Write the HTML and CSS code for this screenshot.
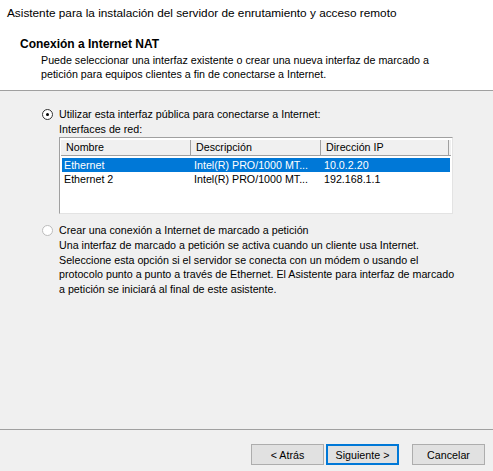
FILE: index.html
```html
<!DOCTYPE html>
<html lang="es">
<head>
<meta charset="utf-8">
<link rel="stylesheet" href="styles.css">
</head>
<body>
<div class="wizard">
  <div class="header">
    <div class="title">Asistente para la instalación del servidor de enrutamiento y acceso remoto</div>
    <div class="heading">Conexión a Internet NAT</div>
    <div class="subtitle">Puede seleccionar una interfaz existente o crear una nueva interfaz de marcado a<br>petición para equipos clientes a fin de conectarse a Internet.</div>
  </div>
  <div class="body">
    <div class="option">
      <span class="radio checked"></span>
      <span class="label">Utilizar esta interfaz pública para conectarse a Internet:</span>
    </div>
    <div class="indent">
      <div class="sublabel">Interfaces de red:</div>
      <div class="listview">
        <div class="lv-header">
          <div class="col c1">Nombre</div>
          <div class="col c2">Descripción</div>
          <div class="col c3">Dirección IP</div>
        </div>
        <div class="lv-row selected">
          <div class="cell c1">Ethernet</div>
          <div class="cell c2">Intel(R) PRO/1000 MT...</div>
          <div class="cell c3">10.0.2.20</div>
        </div>
        <div class="lv-row">
          <div class="cell c1">Ethernet 2</div>
          <div class="cell c2">Intel(R) PRO/1000 MT...</div>
          <div class="cell c3">192.168.1.1</div>
        </div>
      </div>
    </div>
    <div class="option option2">
      <span class="radio"></span>
      <span class="label">Crear una conexión a Internet de marcado a petición</span>
    </div>
    <div class="indent desc">Una interfaz de marcado a petición se activa cuando un cliente usa Internet.<br>Seleccione esta opción si el servidor se conecta con un módem o usando el<br>protocolo punto a punto a través de Ethernet. El Asistente para interfaz de marcado<br>a petición se iniciará al final de este asistente.</div>
  </div>
  <div class="footer">
    <button class="btn">&lt; Atrás</button>
    <button class="btn default">Siguiente &gt;</button>
    <button class="btn cancel">Cancelar</button>
  </div>
</div>
</body>
</html>
```
FILE: styles.css
```css
html, body {
  margin: 0;
  padding: 0;
}
body {
  width: 493px;
  height: 471px;
  background: #f0f0f0;
  font-family: "Liberation Sans", Arial, sans-serif;
  font-size: 10.7px;
  color: #000;
  overflow: hidden;
  white-space: nowrap;
}
.wizard {
  display: flex;
  flex-direction: column;
  height: 471px;
}
.header {
  background: #fff;
  border-bottom: 1px solid #a0a0a0;
  padding-top: 6px;
  box-sizing: border-box;
  height: 91px;
}
.title {
  padding-left: 7px;
  line-height: 14px;
  font-size: 11.8px;
}
.heading {
  font-weight: bold;
  font-size: 12px;
  padding-left: 20px;
  margin-top: 17px;
  line-height: 14px;
}
.subtitle {
  padding-left: 41px;
  margin-top: 2px;
  line-height: 14px;
}
.body {
  flex: 1;
  padding-top: 16px;
  padding-left: 42px;
}
.option {
  display: flex;
  align-items: center;
  height: 14px;
}
.radio {
  width: 11px;
  height: 11px;
  border-radius: 50%;
  border: 1px solid #333;
  background: #fff;
  box-sizing: border-box;
  position: relative;
  margin-right: 6px;
  flex: none;
}
.radio.checked::after {
  content: "";
  position: absolute;
  left: 3px;
  top: 3px;
  width: 3px;
  height: 3px;
  border-radius: 50%;
  background: #000;
}
.option2 .radio {
  border-color: #bcbcbc;
}
.indent {
  padding-left: 17px;
}
.sublabel {
  line-height: 14px;
  margin-top: 1px;
}
.listview {
  margin-top: 1px;
  width: 394px;
  height: 77px;
  background: #fff;
  border: 1px solid;
  border-color: #a0a0a0 #e3e3e3 #e3e3e3 #a0a0a0;
  box-sizing: border-box;
  padding: 1px 2px 0 2px;
}
.lv-header {
  display: flex;
  height: 17px;
  background: #f0f0f0;
  margin: 0 -1px;
  border-bottom: 1px solid #a0a0a0;
  box-sizing: border-box;
  border-top: 1px solid #fff;
}
.col {
  line-height: 15px;
  padding-left: 5px;
  box-sizing: border-box;
  border-right: 1px solid #a0a0a0;
}
.c1 { width: 130px; }
.c2 { width: 130px; }
.c3 { width: 128px; }
.lv-row {
  display: flex;
  height: 14px;
  line-height: 14px;
}
.lv-header + .lv-row {
  margin-top: 2px;
}
.lv-row.selected {
  background: #0078d7;
  color: #fff;
}
.cell {
  padding-left: 2px;
  box-sizing: border-box;
  overflow: hidden;
}
.option2 {
  margin-top: 9px;
}
.desc {
  line-height: 14.5px;
  margin-top: 1px;
}
.footer {
  border-top: 1px solid #a0a0a0;
  height: 42px;
  box-sizing: border-box;
  display: flex;
  justify-content: flex-end;
  padding: 14px 8px 0 0;
}
.btn {
  width: 73px;
  height: 21px;
  background: #e1e1e1;
  border: 1px solid #adadad;
  font-family: inherit;
  font-size: 10.7px;
  color: #000;
  padding: 0;
  margin: 0;
}
.btn.default {
  border: 2px solid #0078d7;
  margin-left: 2px;
}
.btn.cancel {
  margin-left: 13px;
}
```
